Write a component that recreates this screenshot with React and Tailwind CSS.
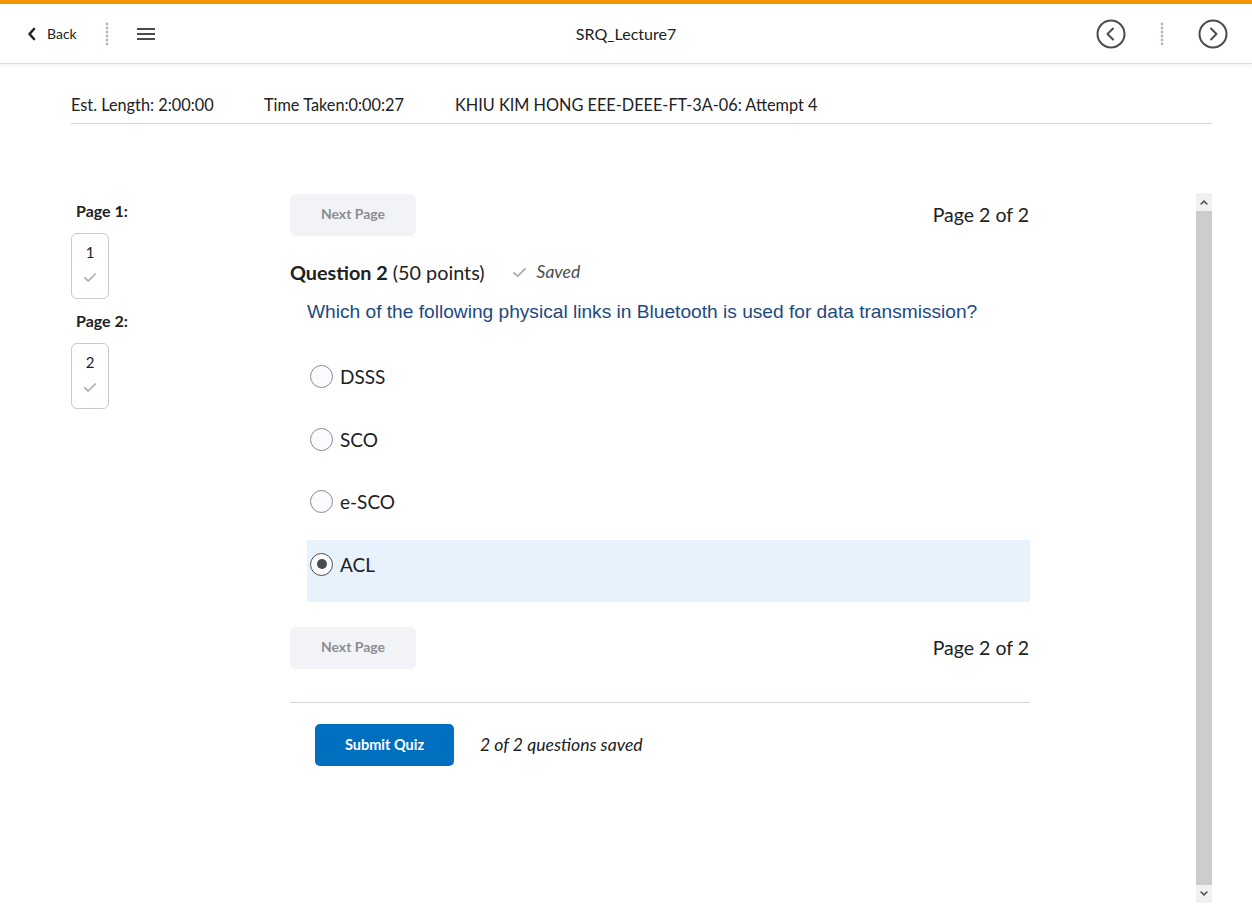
import React from "react";

const Check = ({ className = "" }) => (
  <svg viewBox="0 0 16 12" className={className} fill="none" stroke="currentColor" strokeWidth="2" strokeLinecap="round" strokeLinejoin="round">
    <path d="M2 6.5 L6 10 L14 2" />
  </svg>
);

const Dots = () => (
  <svg width="4" height="24" viewBox="0 0 4 24" className="text-[#b1b9c0]">
    {[2, 6, 10, 14, 18, 22].map((y) => (
      <circle key={y} cx="2" cy={y} r="1.4" fill="currentColor" />
    ))}
  </svg>
);

const CircleChevron = ({ dir }) => (
  <svg width="30" height="30" viewBox="0 0 30 30" fill="none" stroke="#494c4e" strokeWidth="2" strokeLinecap="round" strokeLinejoin="round">
    <circle cx="15" cy="15" r="13.5" />
    {dir === "left" ? <path d="M17 9.5 L11.5 15 L17 20.5" /> : <path d="M13 9.5 L18.5 15 L13 20.5" />}
  </svg>
);

const Radio = ({ checked }) => (
  <span
    className={`flex h-[23px] w-[23px] shrink-0 items-center justify-center rounded-full border bg-[#f9fbff] ${
      checked ? "border-[#494c4e]" : "border-[#868c8f]"
    }`}
  >
    {checked && <span className="h-[10px] w-[10px] rounded-full bg-[#494c4e]" />}
  </span>
);

const NextPageRow = () => (
  <div className="flex items-center justify-between">
    <button className="h-[42px] w-[126px] rounded-[6px] bg-[#f1f3f6] pb-[3px] text-[14px] font-bold leading-[20px] text-[#8c8f92]">
      Next Page
    </button>
    <span className="pr-[1px] text-[19.5px] leading-[24px] text-[#202122]">Page 2 of 2</span>
  </div>
);

const PageBox = ({ n }) => (
  <div className="flex h-[66px] w-[38px] flex-col items-center rounded-[6px] border border-[#c4cbd1] pt-[8px]">
    <span className="text-[15px] leading-[20px] text-[#202122]">{n}</span>
    <Check className="mt-[10px] h-[11px] w-[14px] text-[#a8b0b6]" />
  </div>
);

export default function App() {
  const options = ["DSSS", "SCO", "e-SCO", "ACL"];
  return (
    <div className="min-h-[921px] bg-white text-[#202122]" style={{ fontFamily: "Lato, 'Noto Sans', sans-serif" }}>
      <div className="h-[4px] bg-[#f39500]" />
      <header className="grid h-[60px] grid-cols-[1fr_auto_1fr] items-center border-b border-[#d9d9d9] shadow-[0_2px_4px_rgba(0,0,0,0.06)]">
        <div className="flex items-center pl-[27px]">
          <svg width="10" height="14" viewBox="0 0 10 14" fill="none" stroke="#202122" strokeWidth="2.6" strokeLinecap="round" strokeLinejoin="round">
            <path d="M7 2 L2.5 7 L7 12" />
          </svg>
          <span className="ml-[10px] text-[14px] text-[#202122]">Back</span>
          <span className="ml-[28px] flex items-center">
            <Dots />
          </span>
          <svg className="ml-[28px]" width="18" height="14" viewBox="0 0 18 14" fill="#494c4e">
            <rect x="0" y="1" width="18" height="2" />
            <rect x="0" y="6" width="18" height="2" />
            <rect x="0" y="11" width="18" height="2" />
          </svg>
        </div>
        <div className="text-center text-[16px] text-[#202122]">SRQ_Lecture7</div>
        <div className="flex items-center justify-end pr-[24px]">
          <CircleChevron dir="left" />
          <span className="mx-[34px] flex items-center">
            <Dots />
          </span>
          <CircleChevron dir="right" />
        </div>
      </header>

      <div className="ml-[71px] mr-[40px]">
        <div className="flex border-b border-[#cfd5db] pb-[8px] pt-[31px] text-[16.3px] leading-[20px] text-[#202122]">
          <span className="w-[193px]">Est. Length: 2:00:00</span>
          <span className="w-[191px]">Time Taken:0:00:27</span>
          <span>KHIU KIM HONG EEE-DEEE-FT-3A-06: Attempt 4</span>
        </div>

        <div className="mt-[69px] flex h-[710px]">
          <div className="w-[219px] pt-[8px]">
            <div className="pl-[5px] text-[16px] font-bold leading-[20px]">Page 1:</div>
            <div className="mt-[12px]">
              <PageBox n="1" />
            </div>
            <div className="mt-[12px] pl-[5px] text-[16px] font-bold leading-[20px]">Page 2:</div>
            <div className="mt-[12px]">
              <PageBox n="2" />
            </div>
          </div>

          <div className="w-[740px] pt-[1px]">
            <NextPageRow />
            <div className="mt-[24px] flex items-center text-[19.8px] leading-[24px]">
              <span className="font-bold">Question 2</span>
              <span className="ml-[5px]">(50 points)</span>
              <Check className="ml-[27px] h-[11px] w-[15px] text-[#a8b0b6]" />
              <span className="ml-[10px] text-[17.5px] italic text-[#494c4e]">Saved</span>
            </div>
            <div
              className="mt-[16px] pl-[17px] text-[19.15px] leading-[24px] text-[#1c4a7f]"
              style={{ fontFamily: "'Liberation Sans', Arial, sans-serif" }}
            >
              Which of the following physical links in Bluetooth is used for data transmission?
            </div>
            <div className="ml-[17px] mt-[28px]">
              {options.map((o) => {
                const sel = o === "ACL";
                return (
                  <div
                    key={o}
                    className={`flex h-[62.5px] items-start pl-[3px] pt-[13px] ${sel ? "bg-[#e8f2fc]" : ""}`}
                  >
                    <Radio checked={sel} />
                    <span className="ml-[7px] text-[19px] leading-[23px]">{o}</span>
                  </div>
                );
              })}
            </div>
            <div className="mt-[25px]">
              <NextPageRow />
            </div>
            <div className="mt-[33px] border-t border-[#cfd5db]" />
            <div className="mt-[21px] flex items-center pl-[25px]">
              <button className="h-[42px] w-[139px] rounded-[5px] bg-[#006fbf] text-[14.5px] font-bold text-white">
                Submit Quiz
              </button>
              <span className="ml-[26px] text-[17.6px] italic text-[#202122]">2 of 2 questions saved</span>
            </div>
          </div>

          <div className="flex-1" />

          <div className="flex w-[16px] flex-col">
            <div className="flex h-[18px] items-center justify-center bg-[#f1f1f1]">
              <svg width="8" height="6" viewBox="0 0 8 6" fill="#505050">
                <path d="M0 5 L4 1 L8 5 L6.6 5.8 L4 3.3 L1.4 5.8 Z" />
              </svg>
            </div>
            <div className="flex-1 bg-[#cdcdcd]" />
            <div className="flex h-[18px] items-center justify-center bg-[#f1f1f1]">
              <svg width="8" height="6" viewBox="0 0 8 6" fill="#505050">
                <path d="M0 1 L4 5 L8 1 L6.6 0.2 L4 2.7 L1.4 0.2 Z" />
              </svg>
            </div>
          </div>
        </div>
      </div>
    </div>
  );
}
